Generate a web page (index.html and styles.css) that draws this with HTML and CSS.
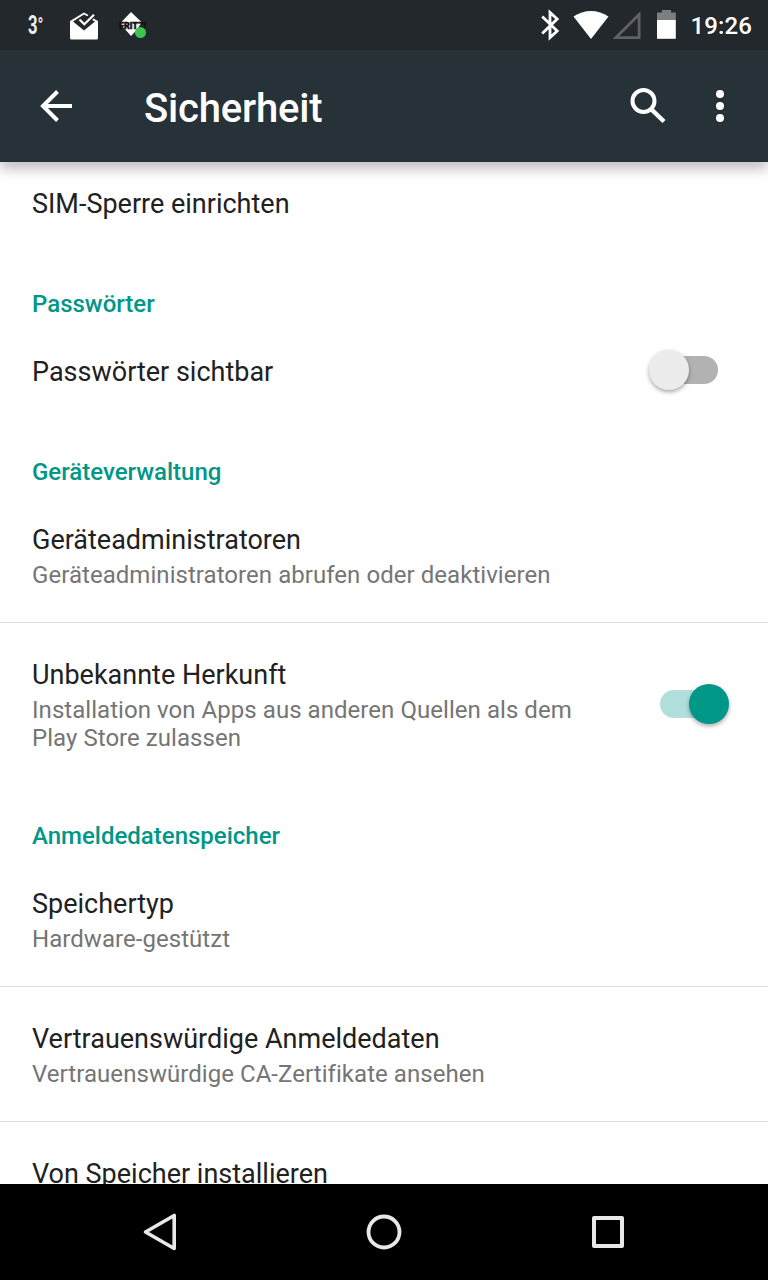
FILE: index.html
```html
<!DOCTYPE html>
<html lang="de">
<head>
<meta charset="utf-8">
<title>Sicherheit</title>
<link rel="stylesheet" href="styles.css">
</head>
<body>
<div class="screen">
  <div class="statusbar">
    <div class="notifications">
      <span class="temp">3<span class="degree">°</span></span>
      <svg class="mail" width="28" height="28" viewBox="0 0 28 28">
        <path fill="#fff" d="M0 9L14 .5l4.500 2.500-1.300 1.300L14 2.500 3 9.500l11 9 11-9-2.800-1.600 1.200-1.500L28 9V26a1.500 1.500 0 0 1-1.500 1.500h-25A1.500 1.500 0 0 1 0 26z"/>
        <path fill="none" stroke="#fff" stroke-width="2.200" d="M9.500 7.500l4.800 4.800L24 2.800"/>
      </svg>
      <svg class="fritz" width="32" height="32" viewBox="0 0 32 32">
        <path fill="#fff" d="M14 1l12 11.500L14 25 3 12.500z"/>
        <text class="fritz-text" x="2" y="17.500" textLength="27" lengthAdjust="spacingAndGlyphs">FRITZ!</text>
        <circle cx="23.500" cy="21.500" r="5.500" fill="#3fc552"/>
      </svg>
    </div>
    <div class="system">
      <svg width="212" height="50" viewBox="0 0 212 50">
        <path fill="none" stroke="#fff" stroke-width="2.800" d="M2.200 16.500l15 14.500-7.200 6.500V12.500l7.200 6.500-15 14.500"/>
        <path fill="#fff" d="M33.500 16.500C44 9 58 9 68.500 16.500L51 39z"/>
        <path fill="none" stroke="#5e6264" stroke-width="2.800" d="M76 37.600L99.100 14.500V37.600z"/>
        <path fill="#7b7f81" d="M122 10h9v2.500h4.800V20h-18.800v-7.500h5z"/>
        <path fill="#fff" d="M117 20h18.800v18.800H117z"/>
      </svg>
      <span class="clock">19:26</span>
    </div>
  </div>
  <header class="appbar">
    <svg class="back" width="34" height="34" viewBox="0 0 34 34"><path fill="none" stroke="#fff" stroke-width="4" d="M33 17H4M18.500 2.500L4 17l14.500 14.500"/></svg>
    <h1 class="title">Sicherheit</h1>
    <svg class="search" width="36" height="36" viewBox="0 0 36 36"><circle cx="13.500" cy="13" r="11" fill="none" stroke="#fff" stroke-width="4"/><path fill="none" stroke="#fff" stroke-width="4.500" d="M21.500 21.500L34 33.500"/></svg>
    <svg class="more" width="8" height="32" viewBox="0 0 8 32"><g fill="#fff"><circle cx="4" cy="4" r="4"/><circle cx="4" cy="16" r="4"/><circle cx="4" cy="28" r="4"/></g></svg>
  </header>
  <main class="content">
    <div class="list">
      <div class="row"><div class="name">SIM-Sperre einrichten</div></div>
      <h2 class="category">Passwörter</h2>
      <div class="row with-switch">
        <div class="name">Passwörter sichtbar</div>
        <div class="switch"><span class="thumb"></span></div>
      </div>
      <h2 class="category">Geräteverwaltung</h2>
      <div class="row detailed divided">
        <div class="name">Geräteadministratoren</div>
        <div class="summary">Geräteadministratoren abrufen oder deaktivieren</div>
      </div>
      <div class="row detailed with-switch">
        <div>
          <div class="name">Unbekannte Herkunft</div>
          <div class="summary">Installation von Apps aus anderen Quellen als dem Play Store zulassen</div>
        </div>
        <div class="switch on"><span class="thumb"></span></div>
      </div>
      <h2 class="category">Anmeldedatenspeicher</h2>
      <div class="row detailed divided">
        <div class="name">Speichertyp</div>
        <div class="summary">Hardware-gestützt</div>
      </div>
      <div class="row detailed divided">
        <div class="name">Vertrauenswürdige Anmeldedaten</div>
        <div class="summary">Vertrauenswürdige CA-Zertifikate ansehen</div>
      </div>
      <div class="row"><div class="name">Von Speicher installieren</div></div>
    </div>
  </main>
  <nav class="navbar">
    <svg width="40" height="40" viewBox="0 0 40 40"><path fill="none" stroke="#e8e8e8" stroke-width="3.600" stroke-linejoin="round" d="M34.200 3.500v33L5.500 20z"/></svg>
    <svg width="40" height="40" viewBox="0 0 40 40"><circle cx="20" cy="20" r="15.500" fill="none" stroke="#e8e8e8" stroke-width="3.800"/></svg>
    <svg width="40" height="40" viewBox="0 0 40 40"><rect x="6" y="6" width="28" height="28" fill="none" stroke="#e8e8e8" stroke-width="4" stroke-linejoin="round"/></svg>
  </nav>
</div>
</body>
</html>
```
FILE: styles.css
```css
body {
  margin: 0;
  font-family: Roboto, "Liberation Sans", sans-serif;
}
.screen {
  width: 768px;
  height: 1280px;
  display: flex;
  flex-direction: column;
  overflow: hidden;
  background: #fff;
}
.statusbar {
  height: 50px;
  flex: none;
  display: flex;
  justify-content: space-between;
  background: #22282b;
  color: #fff;
}
.notifications {
  display: flex;
  align-items: center;
  padding-left: 28px;
}
.temp {
  width: 42px;
  font-size: 26px;
  font-weight: 700;
  line-height: 50px;
  color: #eee;
  transform: scaleX(0.64);
  transform-origin: left;
}
.degree {
  font-size: 24px;
  font-weight: 500;
}
.mail {
  margin-top: 1px;
}
.fritz {
  margin-left: 19px;
  margin-top: 4px;
}
.fritz-text {
  font: 900 9px Roboto, sans-serif;
  fill: #111;
  stroke: #111;
  stroke-width: 0.5;
}
.system {
  display: flex;
  padding-right: 16px;
}
.system svg {
  width: 212px;
  margin-right: -61px;
}
.clock {
  font-size: 24px;
  font-weight: 500;
  line-height: 52px;
  letter-spacing: 0.1px;
}
.appbar {
  position: relative;
  z-index: 1;
  height: 112px;
  flex: none;
  box-sizing: border-box;
  display: flex;
  align-items: center;
  padding: 0 44px 0 39px;
  background: #273238;
  color: #fff;
  box-shadow: 0 7px 12px rgba(0, 0, 0, 0.25);
}
.title {
  flex: 1;
  margin: 6px 0 0 71px;
  font-size: 40px;
  font-weight: 500;
  line-height: 48px;
  letter-spacing: -0.2px;
}
.search {
  margin-right: 50px;
}
.content {
  flex: 1;
  min-height: 0;
  overflow: hidden;
}
.list {
  margin-top: -10px;
}
.row {
  height: 101px;
  box-sizing: border-box;
  padding: 35px 50px 32px 32px;
}
.row.detailed {
  height: auto;
  padding-bottom: 33px;
}
.divided {
  border-bottom: 1px solid #dcdcdc;
}
.with-switch {
  position: relative;
}
.name {
  font-size: 27px;
  line-height: 34px;
  color: #212121;
}
.summary {
  margin-top: 4px;
  max-width: 580px;
  font-size: 24px;
  line-height: 28px;
  letter-spacing: 0.05px;
  color: #757575;
}
.divided .summary {
  max-width: none;
}
.category {
  margin: 0;
  padding: 37px 32px 2px;
  font-size: 24px;
  font-weight: 500;
  line-height: 28px;
  color: #009688;
}
.switch {
  position: absolute;
  right: 50px;
  top: 50%;
  width: 58px;
  height: 28px;
  margin-top: -14.5px;
  border-radius: 14px;
  background: #b2b2b2;
}
.thumb {
  position: absolute;
  left: -11px;
  top: -6px;
  width: 40px;
  height: 40px;
  border-radius: 50%;
  background: #ececec;
  box-shadow: 0 2px 4px rgba(0, 0, 0, 0.35);
}
.switch.on {
  margin-top: -14px;
  background: #b2dfdb;
}
.switch.on .thumb {
  left: 29px;
  background: #009688;
}
.navbar {
  height: 96px;
  flex: none;
  display: flex;
  align-items: center;
  justify-content: center;
  gap: 184px;
  background: #000;
}
```
